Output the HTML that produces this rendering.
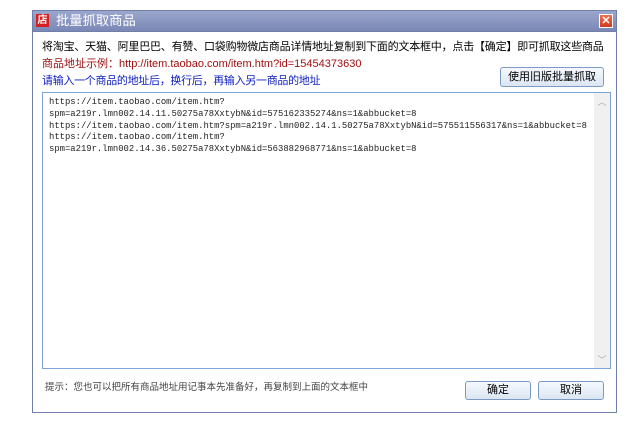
<!DOCTYPE html>
<html><head><meta charset="utf-8"><style>
body{margin:0;width:639px;height:436px;background:#fff;position:relative;overflow:hidden;font-family:"Liberation Sans","Noto Sans CJK SC",sans-serif;}
.win{position:absolute;left:32px;top:10px;width:583px;height:401px;border:1px solid #6f7fa8;background:#fff;}
.title{position:absolute;left:0;top:0;right:0;height:20px;background:linear-gradient(#9aa6cc,#7b88b6);border-bottom:1px solid #6f7fa8;}
.title .ic{position:absolute;left:3px;top:3px;width:13px;height:13px;background:#d42020;color:#fff;font-size:10px;line-height:13px;text-align:center;font-weight:bold;}
.title .t{position:absolute;left:23px;top:1px;font-size:13.3px;color:#fff;line-height:18px;}
.close{position:absolute;right:3px;top:3px;width:14px;height:14px;background:linear-gradient(#f07050,#d03a20);border:1px solid #fff;box-sizing:border-box;color:#fff;font-size:11px;line-height:12px;text-align:center;font-weight:bold;}
.txt{position:absolute;font-size:11px;line-height:14px;white-space:nowrap;}
.btn{position:absolute;border:1px solid #7a9cc4;border-radius:3px;background:linear-gradient(#f6f9fd,#dbe6f3);font-size:11px;text-align:center;box-sizing:border-box;color:#000;}
.ta{position:absolute;left:9px;top:81px;width:569px;height:277px;border:1px solid #7ea4d4;box-sizing:border-box;background:#fff;}
.code{position:absolute;left:6px;top:4px;font-family:"Liberation Mono",monospace;font-size:8.9px;line-height:11.8px;color:#222;white-space:pre;}
.sb{position:absolute;right:0;top:0;width:16px;bottom:0;background:#f0f0f0;}
</style></head><body>
<div class="win">
<div class="title"><div class="ic">店</div><div class="t">批量抓取商品</div><div class="close">✕</div></div>
<div class="txt" style="left:9px;top:29px;color:#000;letter-spacing:-0.2px">将淘宝、天猫、阿里巴巴、有赞、口袋购物微店商品详情地址复制到下面的文本框中，点击【确定】即可抓取这些商品</div>
<div class="txt" style="left:9px;top:46px;color:#a01010">商品地址示例：http://item.taobao.com/item.htm?id=15454373630</div>
<div class="txt" style="left:9px;top:63px;color:#1020c0;letter-spacing:-0.3px">请输入一个商品的地址后，换行后，再输入另一商品的地址</div>
<div class="btn" style="left:467px;top:56px;width:104px;height:20px;line-height:18px">使用旧版批量抓取</div>
<div class="ta"><div class="code">https://item.taobao.com/item.htm?
spm=a219r.lmn002.14.11.50275a78XxtybN&amp;id=575162335274&amp;ns=1&amp;abbucket=8
https://item.taobao.com/item.htm?spm=a219r.lmn002.14.1.50275a78XxtybN&amp;id=575511556317&amp;ns=1&amp;abbucket=8
https://item.taobao.com/item.htm?
spm=a219r.lmn002.14.36.50275a78XxtybN&amp;id=563882968771&amp;ns=1&amp;abbucket=8</div>
<div class="sb"><div style="position:absolute;top:2px;width:16px;text-align:center;font-size:9px;color:#aaa">︿</div><div style="position:absolute;bottom:2px;width:16px;text-align:center;font-size:9px;color:#aaa">﹀</div></div></div>
<div class="txt" style="left:12px;top:370px;color:#444;font-size:9.5px">提示：您也可以把所有商品地址用记事本先准备好，再复制到上面的文本框中</div>
<div class="btn" style="left:432px;top:370px;width:66px;height:19px;line-height:17px">确定</div>
<div class="btn" style="left:505px;top:370px;width:66px;height:19px;line-height:17px">取消</div>
</div>
</body></html>
